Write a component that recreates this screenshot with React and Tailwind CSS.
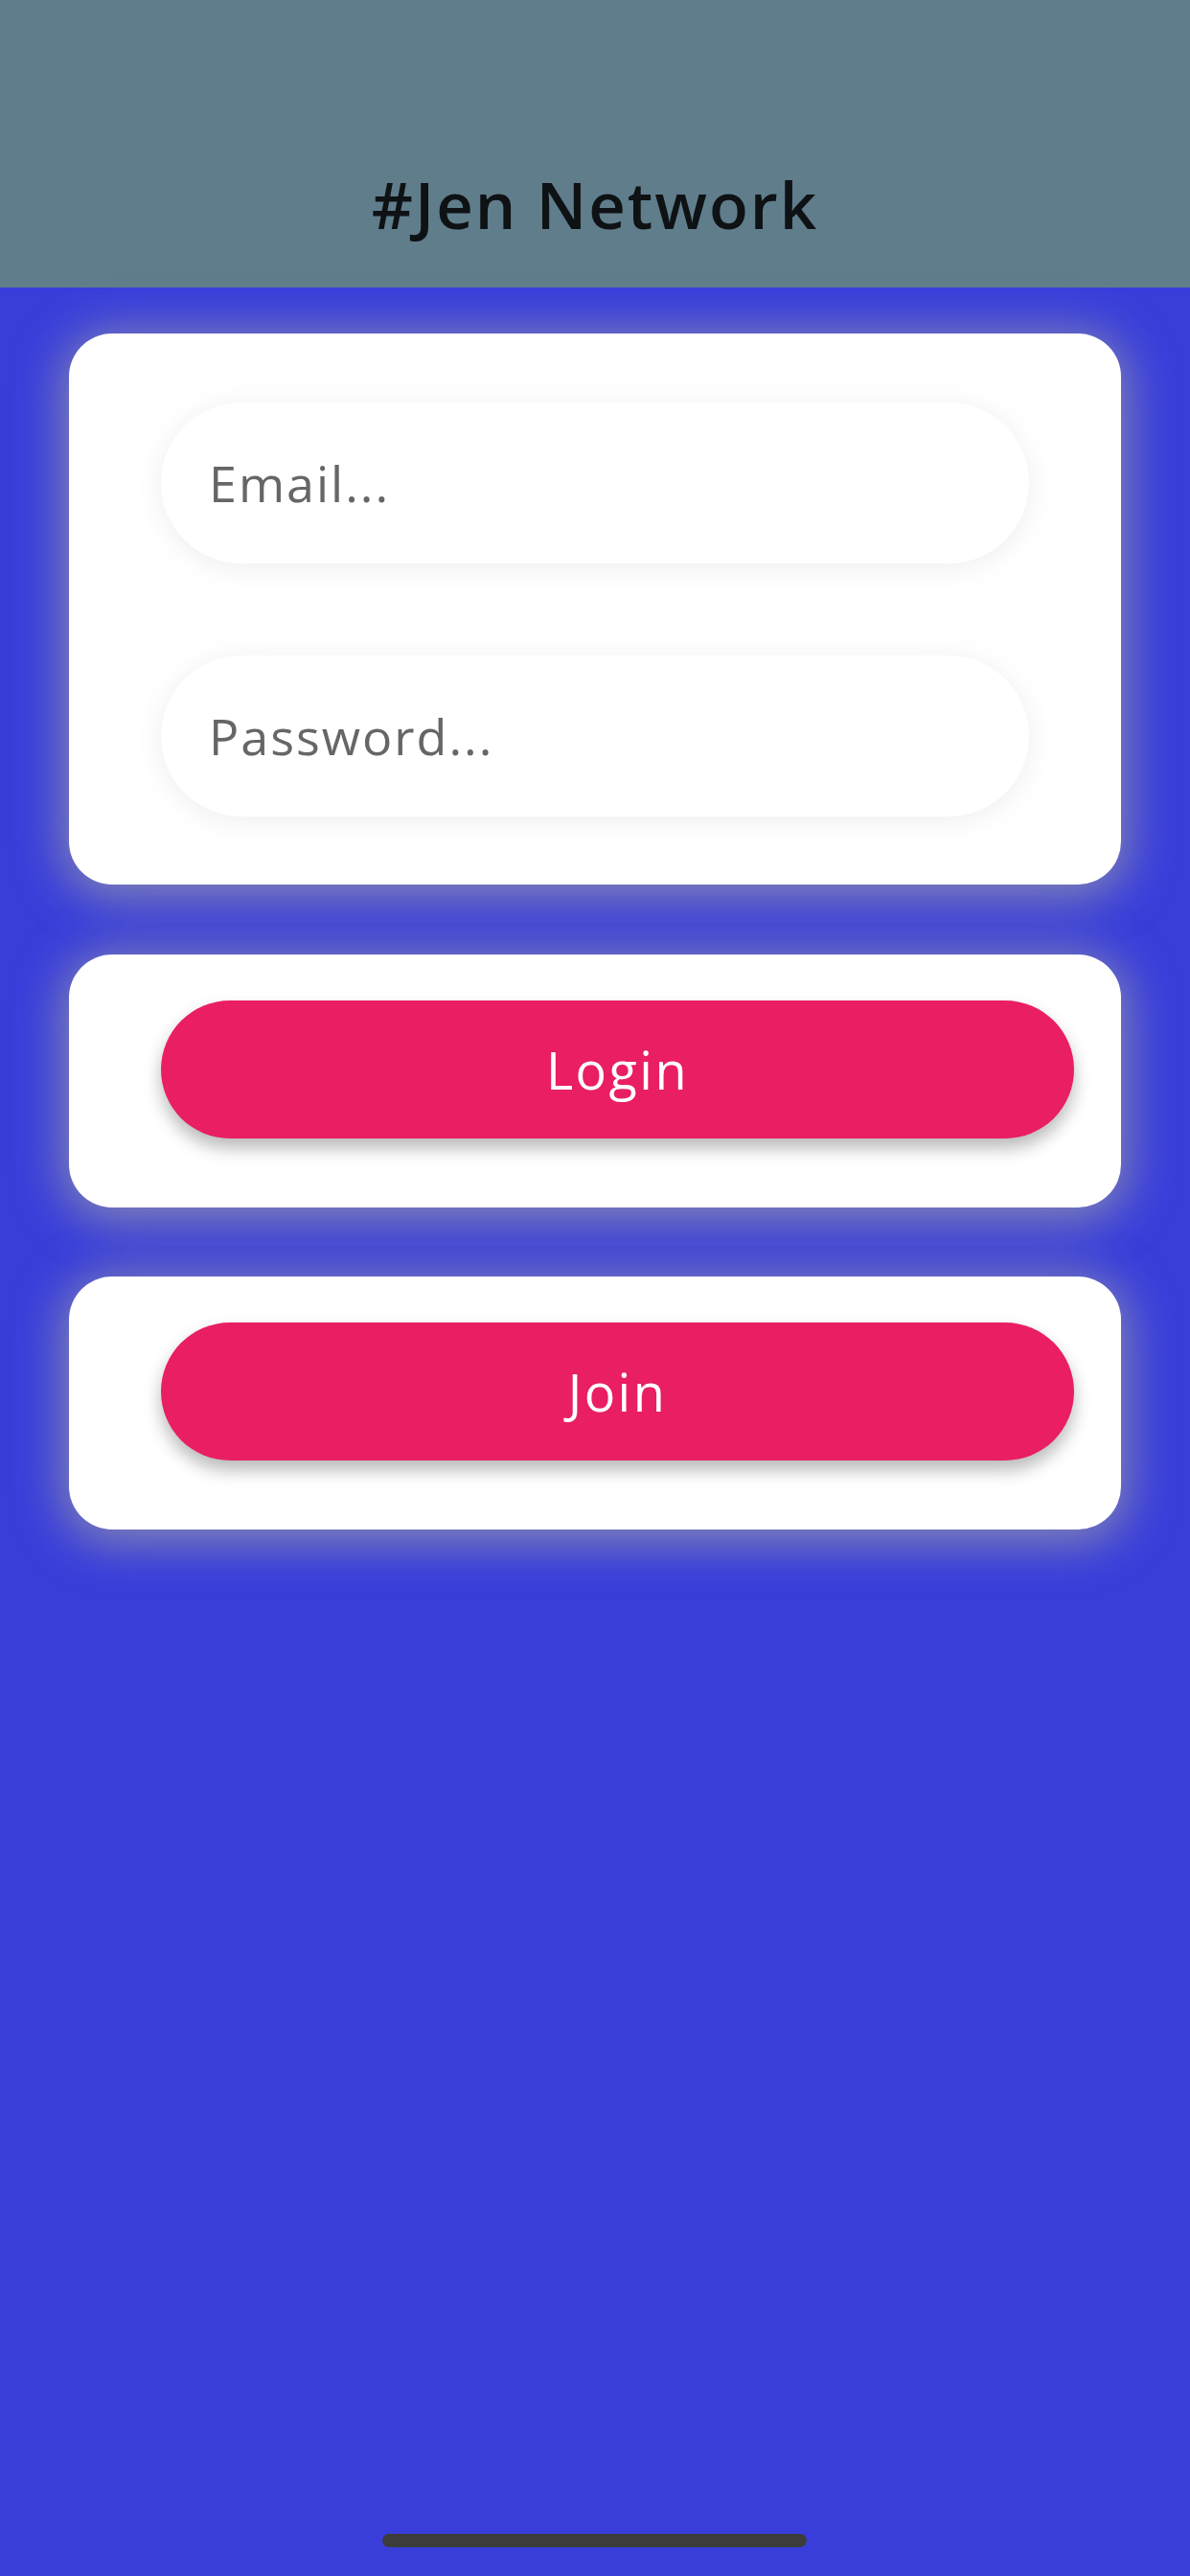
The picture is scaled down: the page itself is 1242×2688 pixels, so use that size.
import React from "react";

const font = { fontFamily: '"Open Sans", "Noto Sans", sans-serif' };

function Field({ label }) {
  return (
    <div className="h-[168px] w-full rounded-full bg-white flex items-center pl-[50px] shadow-[0_4px_30px_rgba(0,0,0,0.07)]">
      <span className="text-[52px] leading-none text-[#666666] font-normal tracking-[2px]">{label}</span>
    </div>
  );
}

function ButtonCard({ label, className }) {
  return (
    <div className={"rounded-[45px] bg-white pt-[48px] pb-[72px] pl-[96px] pr-[49px] shadow-[0_6px_50px_6px_rgba(163,163,163,0.75)] " + className}>
      <div className="h-[144px] w-full rounded-full bg-[#e91e63] flex items-center justify-center shadow-[0_10px_18px_rgba(0,0,0,0.28)]">
        <span className="text-[54px] leading-none text-white font-medium tracking-[2.5px]">{label}</span>
      </div>
    </div>
  );
}

export default function App() {
  return (
    <div className="relative w-[1242px] h-[2688px] overflow-hidden bg-[#393edb] flex flex-col" style={font}>
      <header className="h-[300px] shrink-0 bg-[#607d8b] flex items-end justify-center pb-[53px]">
        <h1 className="text-[67px] leading-none font-semibold text-[#0e1215] tracking-[2px]">#Jen Network</h1>
      </header>
      <main className="flex-1 px-[72px] pt-[48px] flex flex-col">
        <div className="rounded-[45px] bg-white px-[96px] pt-[72px] pb-[71px] flex flex-col gap-[96px] shadow-[0_6px_50px_6px_rgba(163,163,163,0.75)]">
          <Field label="Email..." />
          <Field label="Password..." />
        </div>
        <ButtonCard label="Login" className="mt-[73px]" />
        <ButtonCard label="Join" className="mt-[72px]" />
      </main>
      <div className="absolute left-[399px] bottom-[30px] w-[443px] h-[14px] rounded-full bg-[#3c3c3c]" />
    </div>
  );
}
